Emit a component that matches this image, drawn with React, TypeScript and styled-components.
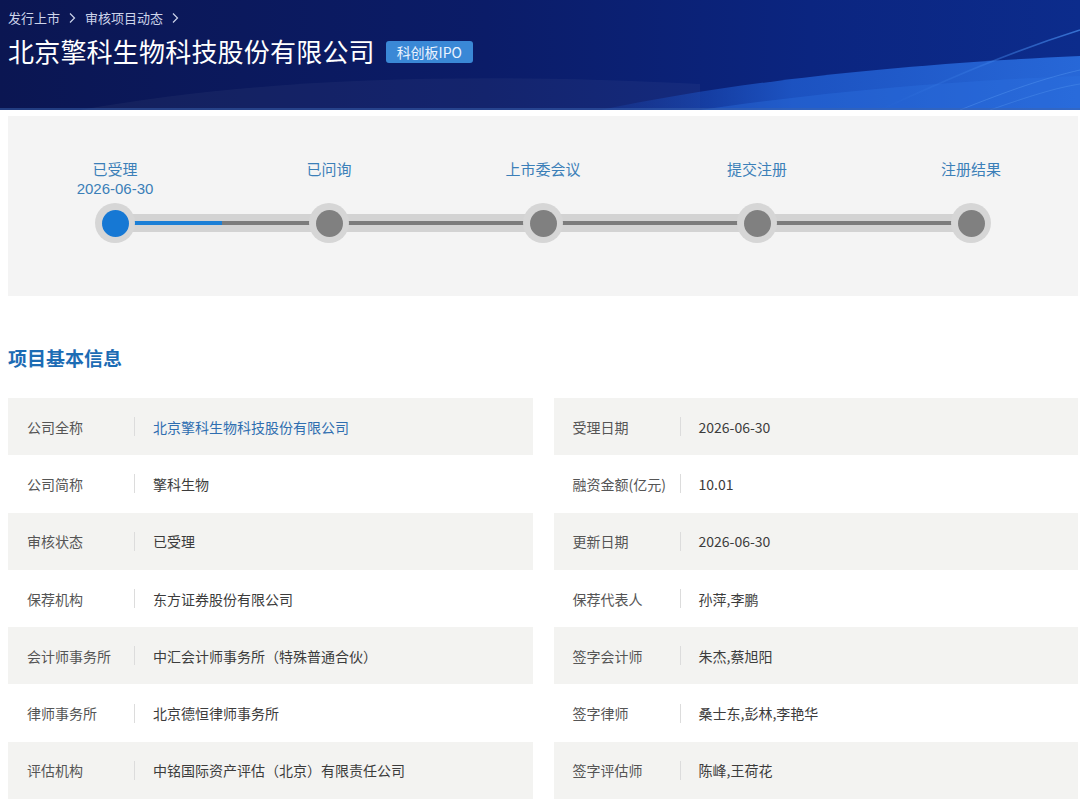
import React from "react";
import styled, { createGlobalStyle } from "styled-components";

const GlobalStyle = createGlobalStyle`
  html, body { margin: 0; padding: 0; background: #ffffff; }
  body {
    font-family: "Noto Sans CJK SC", "Noto Sans", "Liberation Sans", sans-serif;
    color: #333;
  }
  * { box-sizing: border-box; }
`;

const Page = styled.div`
  width: 1080px;
  display: flex;
  flex-direction: column;
`;

const Header = styled.header`
  position: relative;
  height: 110px;
  overflow: hidden;
  background: linear-gradient(90deg, #0b1652 0%, #0b1c68 45%, #0b2580 75%, #0c2c8c 100%);
  padding: 8px 0 0 8px;
  display: flex;
  flex-direction: column;
  gap: 5px;
`;

const HeaderArt = styled.svg`
  position: absolute;
  inset: 0;
  width: 100%;
  height: 100%;
  pointer-events: none;
`;

const Crumbs = styled.nav`
  position: relative;
  z-index: 1;
  display: flex;
  align-items: center;
  gap: 4px;
  font-size: 13px;
  line-height: 20px;
  color: #cdd4ea;
`;

const CrumbSep = styled.svg`
  width: 14px;
  height: 14px;
  margin: 0 2px 0 1px;
`;

const TitleRow = styled.div`
  position: relative;
  z-index: 1;
  display: flex;
  align-items: center;
  gap: 11px;
`;

const Title = styled.h1`
  margin: 0;
  font-size: 26px;
  line-height: 36px;
  font-weight: 400;
  color: #ffffff;
  letter-spacing: 0.2px;
`;

const Badge = styled.span`
  display: inline-flex;
  align-items: center;
  justify-content: center;
  height: 22px;
  width: 87px;
  border-radius: 3px;
  background: #3a88d6;
  color: #eaf3ff;
  font-size: 14px;
  margin-top: 1px;
`;

const Body = styled.main`
  padding: 6px 2px 0 8px;
  display: flex;
  flex-direction: column;
`;

const StepPanel = styled.section`
  background: #f4f4f4;
  height: 180px;
  padding-top: 44px;
  display: grid;
  grid-template-columns: repeat(5, 1fr);
`;

const Step = styled.div`
  display: flex;
  flex-direction: column;
  align-items: center;
`;

const StepLabel = styled.div`
  height: 36px;
  display: flex;
  flex-direction: column;
  align-items: center;
`;

const StepName = styled.div`
  height: 18px;
  font-size: 15px;
  line-height: 18px;
  color: #3b7fb8;
  white-space: nowrap;
`;

const StepDate = styled.div`
  margin-top: 1.5px;
  height: 18px;
  font-family: "Liberation Sans", Arial, sans-serif;
  font-size: 15px;
  line-height: 18px;
  color: #3b7fb8;
  white-space: nowrap;
`;

const Track = styled.div<{ $first?: boolean; $last?: boolean }>`
  position: relative;
  width: 100%;
  height: 40px;
  margin-top: 7px;
  display: flex;
  justify-content: center;
  align-items: center;

  &::before,
  &::after {
    content: "";
    position: absolute;
    top: 11px;
    height: 18px;
    width: 50%;
    background: #d3d3d3;
  }
  &::before {
    left: 0;
    display: ${(p) => (p.$first ? "none" : "block")};
  }
  &::after {
    right: 0;
    display: ${(p) => (p.$last ? "none" : "block")};
  }
`;

const Line = styled.span<{ $side: "left" | "right"; $active?: boolean }>`
  position: absolute;
  z-index: 1;
  top: 18px;
  height: 4px;
  width: 50%;
  ${(p) => (p.$side === "left" ? "left: 0;" : "right: 0;")}
  background: ${(p) => (p.$active ? "#1b7fd6" : "#7c7c7c")};
`;

const Dot = styled.span<{ $active?: boolean }>`
  position: relative;
  z-index: 2;
  width: 40px;
  height: 40px;
  border-radius: 50%;
  background: #d6d6d6;
  display: flex;
  align-items: center;
  justify-content: center;

  &::after {
    content: "";
    width: 27px;
    height: 27px;
    border-radius: 50%;
    background: ${(p) => (p.$active ? "#1678d4" : "#808080")};
  }
`;

const SectionTitle = styled.h2`
  margin: 49px 0 0;
  font-size: 19px;
  line-height: 26px;
  font-weight: 700;
  color: #1c6cb4;
`;

const InfoGrid = styled.section`
  margin-top: 27px;
  display: grid;
  grid-template-columns: 1fr 1fr;
  column-gap: 21px;
`;

const Cell = styled.div<{ $shaded?: boolean }>`
  height: 57.3px;
  display: flex;
  align-items: center;
  background: ${(p) => (p.$shaded ? "#f3f3f1" : "transparent")};
  font-size: 14px;
`;

const CellLabel = styled.span`
  width: 126px;
  padding-left: 19px;
  color: #555;
  white-space: nowrap;
`;

const Divider = styled.span`
  width: 1px;
  height: 19px;
  background: #dcdcdc;
`;

const CellValue = styled.span<{ $link?: boolean }>`
  padding-left: 18px;
  color: ${(p) => (p.$link ? "#2f6eb0" : "#3c3c3c")};
  white-space: nowrap;
`;

const steps = [
  { label: "已受理", date: "2026-06-30", active: true },
  { label: "已问询" },
  { label: "上市委会议" },
  { label: "提交注册" },
  { label: "注册结果" },
];

const rows: [string, string, string, string][] = [
  ["公司全称", "北京擎科生物科技股份有限公司", "受理日期", "2026-06-30"],
  ["公司简称", "擎科生物", "融资金额(亿元)", "10.01"],
  ["审核状态", "已受理", "更新日期", "2026-06-30"],
  ["保荐机构", "东方证券股份有限公司", "保荐代表人", "孙萍,李鹏"],
  ["会计师事务所", "中汇会计师事务所（特殊普通合伙）", "签字会计师", "朱杰,蔡旭阳"],
  ["律师事务所", "北京德恒律师事务所", "签字律师", "桑士东,彭林,李艳华"],
  ["评估机构", "中铭国际资产评估（北京）有限责任公司", "签字评估师", "陈峰,王荷花"],
];

const Chevron = () => (
  <CrumbSep viewBox="0 0 14 14" fill="none">
    <path d="M5 2.5 L9.5 7 L5 11.5" stroke="#cdd4ea" strokeWidth="1.2" />
  </CrumbSep>
);

export default function App() {
  return (
    <Page>
      <GlobalStyle />
      <Header>
        <HeaderArt viewBox="0 0 1080 110" preserveAspectRatio="none">
          <defs>
            <linearGradient id="wave" x1="0" y1="0" x2="1" y2="0">
              <stop offset="0" stopColor="#1a4ab8" stopOpacity="0.2" />
              <stop offset="0.4" stopColor="#1f5acc" stopOpacity="0.85" />
              <stop offset="1" stopColor="#2a6ee0" stopOpacity="0.9" />
            </linearGradient>
            <linearGradient id="wave2" x1="0" y1="0" x2="1" y2="0">
              <stop offset="0" stopColor="#3a7fe8" stopOpacity="0" />
              <stop offset="1" stopColor="#4a90f0" stopOpacity="0.7" />
            </linearGradient>
          </defs>
          <path d="M80 110 C 260 78, 460 72, 700 84 L 700 110 Z" fill="#ffffff" opacity="0.04" />
          <path d="M 600 110 C 720 86, 860 66, 1080 56 L 1080 110 Z" fill="url(#wave)" />
          <path d="M 700 110 C 820 92, 960 80, 1080 76 L 1080 110 Z" fill="#2f74e2" opacity="0.35" />
          <path d="M 880 110 C 950 78, 1010 52, 1080 30" stroke="url(#wave2)" strokeWidth="1.5" fill="none" />
          <path d="M 960 110 C 1010 90, 1045 78, 1080 70" stroke="#5a9af2" strokeWidth="1" fill="none" opacity="0.4" />
          <path d="M 990 110 C 1030 96, 1055 88, 1080 84" stroke="#5a9af2" strokeWidth="1" fill="none" opacity="0.35" />
          <path d="M 0 109 L 1080 109" stroke="#3a64b0" strokeWidth="2" opacity="0.5" />
        </HeaderArt>
        <Crumbs>
          <span>发行上市</span>
          <Chevron />
          <span>审核项目动态</span>
          <Chevron />
        </Crumbs>
        <TitleRow>
          <Title>北京擎科生物科技股份有限公司</Title>
          <Badge>科创板IPO</Badge>
        </TitleRow>
      </Header>

      <Body>
        <StepPanel>
          {steps.map((s, i) => (
            <Step key={s.label}>
              <StepLabel>
                <StepName>{s.label}</StepName>
                {s.date && <StepDate>{s.date}</StepDate>}
              </StepLabel>
              <Track $first={i === 0} $last={i === steps.length - 1}>
                {i > 0 && <Line $side="left" />}
                {i < steps.length - 1 && <Line $side="right" $active={i === 0} />}
                <Dot $active={s.active} />
              </Track>
            </Step>
          ))}
        </StepPanel>

        <SectionTitle>项目基本信息</SectionTitle>

        <InfoGrid>
          {rows.map(([l1, v1, l2, v2], i) => (
            <React.Fragment key={l1}>
              <Cell $shaded={i % 2 === 0}>
                <CellLabel>{l1}</CellLabel>
                <Divider />
                <CellValue $link={i === 0}>{v1}</CellValue>
              </Cell>
              <Cell $shaded={i % 2 === 0}>
                <CellLabel>{l2}</CellLabel>
                <Divider />
                <CellValue>{v2}</CellValue>
              </Cell>
            </React.Fragment>
          ))}
        </InfoGrid>
      </Body>
    </Page>
  );
}
